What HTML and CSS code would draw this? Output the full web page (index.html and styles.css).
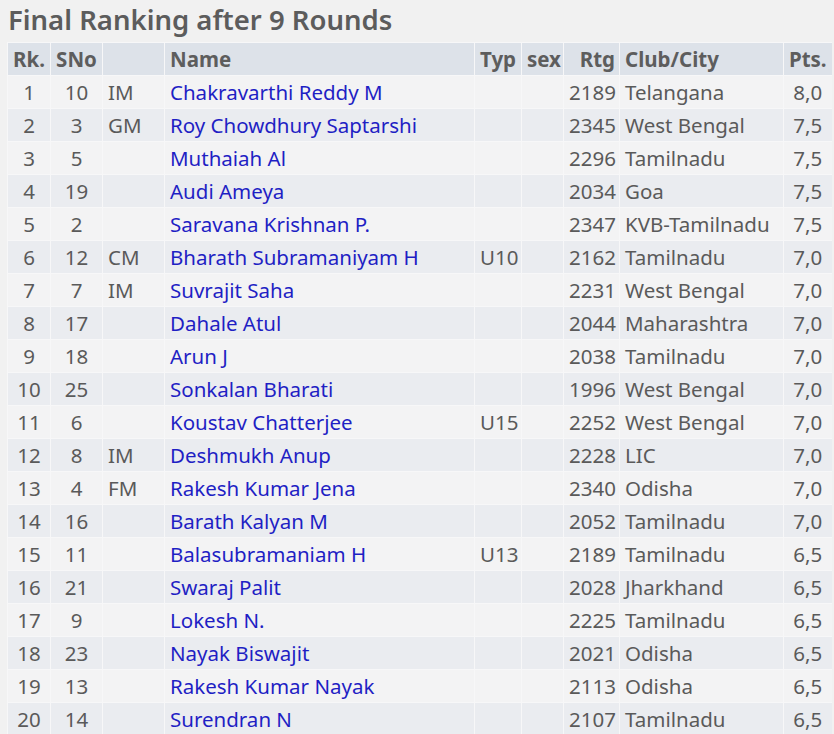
FILE: index.html
```html
<!DOCTYPE html>
<html>
<head>
<meta charset="utf-8">
<link rel="stylesheet" href="styles.css">
</head>
<body>
<h1 class="title">Final Ranking after 9 Rounds</h1>
<table class="rank">
<colgroup>
<col class="c-rk"><col class="c-sno"><col class="c-tit"><col class="c-name"><col class="c-typ"><col class="c-sex"><col class="c-rtg"><col class="c-club"><col class="c-pts">
</colgroup>
<thead>
<tr><th class="ctr">Rk.</th><th class="ctr">SNo</th><th></th><th class="lft">Name</th><th class="lft">Typ</th><th class="lft">sex</th><th class="rgt">Rtg</th><th class="lft">Club/City</th><th class="ctr">Pts.</th></tr>
</thead>
<tbody>
<tr><td class="ctr">1</td><td class="ctr">10</td><td>IM</td><td class="name">Chakravarthi Reddy M</td><td></td><td></td><td class="rgt">2189</td><td>Telangana</td><td class="ctr">8,0</td></tr>
<tr><td class="ctr">2</td><td class="ctr">3</td><td>GM</td><td class="name">Roy Chowdhury Saptarshi</td><td></td><td></td><td class="rgt">2345</td><td>West Bengal</td><td class="ctr">7,5</td></tr>
<tr><td class="ctr">3</td><td class="ctr">5</td><td></td><td class="name">Muthaiah Al</td><td></td><td></td><td class="rgt">2296</td><td>Tamilnadu</td><td class="ctr">7,5</td></tr>
<tr><td class="ctr">4</td><td class="ctr">19</td><td></td><td class="name">Audi Ameya</td><td></td><td></td><td class="rgt">2034</td><td>Goa</td><td class="ctr">7,5</td></tr>
<tr><td class="ctr">5</td><td class="ctr">2</td><td></td><td class="name">Saravana Krishnan P.</td><td></td><td></td><td class="rgt">2347</td><td>KVB-Tamilnadu</td><td class="ctr">7,5</td></tr>
<tr><td class="ctr">6</td><td class="ctr">12</td><td>CM</td><td class="name">Bharath Subramaniyam H</td><td>U10</td><td></td><td class="rgt">2162</td><td>Tamilnadu</td><td class="ctr">7,0</td></tr>
<tr><td class="ctr">7</td><td class="ctr">7</td><td>IM</td><td class="name">Suvrajit Saha</td><td></td><td></td><td class="rgt">2231</td><td>West Bengal</td><td class="ctr">7,0</td></tr>
<tr><td class="ctr">8</td><td class="ctr">17</td><td></td><td class="name">Dahale Atul</td><td></td><td></td><td class="rgt">2044</td><td>Maharashtra</td><td class="ctr">7,0</td></tr>
<tr><td class="ctr">9</td><td class="ctr">18</td><td></td><td class="name">Arun J</td><td></td><td></td><td class="rgt">2038</td><td>Tamilnadu</td><td class="ctr">7,0</td></tr>
<tr><td class="ctr">10</td><td class="ctr">25</td><td></td><td class="name">Sonkalan Bharati</td><td></td><td></td><td class="rgt">1996</td><td>West Bengal</td><td class="ctr">7,0</td></tr>
<tr><td class="ctr">11</td><td class="ctr">6</td><td></td><td class="name">Koustav Chatterjee</td><td>U15</td><td></td><td class="rgt">2252</td><td>West Bengal</td><td class="ctr">7,0</td></tr>
<tr><td class="ctr">12</td><td class="ctr">8</td><td>IM</td><td class="name">Deshmukh Anup</td><td></td><td></td><td class="rgt">2228</td><td>LIC</td><td class="ctr">7,0</td></tr>
<tr><td class="ctr">13</td><td class="ctr">4</td><td>FM</td><td class="name">Rakesh Kumar Jena</td><td></td><td></td><td class="rgt">2340</td><td>Odisha</td><td class="ctr">7,0</td></tr>
<tr><td class="ctr">14</td><td class="ctr">16</td><td></td><td class="name">Barath Kalyan M</td><td></td><td></td><td class="rgt">2052</td><td>Tamilnadu</td><td class="ctr">7,0</td></tr>
<tr><td class="ctr">15</td><td class="ctr">11</td><td></td><td class="name">Balasubramaniam H</td><td>U13</td><td></td><td class="rgt">2189</td><td>Tamilnadu</td><td class="ctr">6,5</td></tr>
<tr><td class="ctr">16</td><td class="ctr">21</td><td></td><td class="name">Swaraj Palit</td><td></td><td></td><td class="rgt">2028</td><td>Jharkhand</td><td class="ctr">6,5</td></tr>
<tr><td class="ctr">17</td><td class="ctr">9</td><td></td><td class="name">Lokesh N.</td><td></td><td></td><td class="rgt">2225</td><td>Tamilnadu</td><td class="ctr">6,5</td></tr>
<tr><td class="ctr">18</td><td class="ctr">23</td><td></td><td class="name">Nayak Biswajit</td><td></td><td></td><td class="rgt">2021</td><td>Odisha</td><td class="ctr">6,5</td></tr>
<tr><td class="ctr">19</td><td class="ctr">13</td><td></td><td class="name">Rakesh Kumar Nayak</td><td></td><td></td><td class="rgt">2113</td><td>Odisha</td><td class="ctr">6,5</td></tr>
<tr><td class="ctr">20</td><td class="ctr">14</td><td></td><td class="name">Surendran N</td><td></td><td></td><td class="rgt">2107</td><td>Tamilnadu</td><td class="ctr">6,5</td></tr>
</tbody>
</table>
</body>
</html>
```
FILE: styles.css
```css
html, body {
  margin: 0;
  padding: 0;
  background: #f1f1f1;
}
body {
  padding: 0 0 0 7px;
  font-family: "Noto Sans", "Open Sans", sans-serif;
  color: #5a5a5a;
  overflow: hidden;
}
.title {
  margin: 0;
  padding: 0 0 0 1px;
  height: 42px;
  line-height: 40px;
  font-size: 27.5px;
  font-weight: 600;
  color: #5c5c5c;
  white-space: nowrap;
}
.rank {
  border-collapse: collapse;
  table-layout: fixed;
  width: 824px;
  font-size: 20.5px;
}
.c-rk { width: 43px; }
.c-sno { width: 52px; }
.c-tit { width: 62px; }
.c-name { width: 310px; }
.c-typ { width: 47px; }
.c-sex { width: 42px; }
.c-rtg { width: 56px; }
.c-club { width: 164px; }
.c-pts { width: 48px; }
.rank th, .rank td {
  height: 33px;
  padding: 0 4px 0 5px;
  box-sizing: border-box;
  white-space: nowrap;
  text-align: left;
  border-left: 1px solid #f7f7f8;
  border-top: 1px solid #f7f7f8;
}
.rank th {
  background: #dde2e9;
  font-weight: 700;
  color: #5d5d5d;
}
.rank tbody tr:nth-child(odd) td { background: #f3f3f4; }
.rank tbody tr:nth-child(even) td { background: #eaecf0; }
.rank .ctr { text-align: center; padding: 0; }
.rank .rgt { text-align: right; }
.rank .name { color: #1f1fc4; }
```
